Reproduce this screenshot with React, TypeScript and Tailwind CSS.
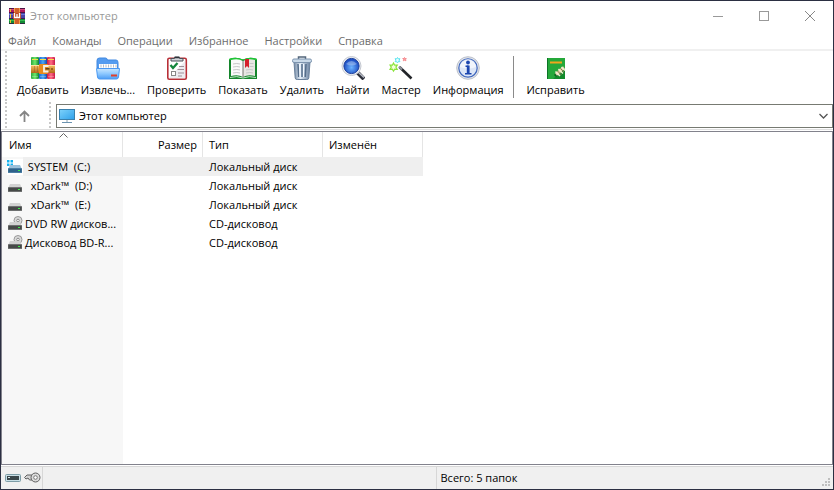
import { useState } from "react";
import type { ReactNode } from "react";

const menuItems = ["Файл", "Команды", "Операции", "Избранное", "Настройки", "Справка"];

const AppLogo = () => (
  <svg width="16" height="16" viewBox="0 0 16 16" aria-hidden="true">
    <rect width="16" height="5" fill="#b0185a" />
    <rect y="5" width="16" height="6" fill="#4a45a8" />
    <rect y="11" width="16" height="5" fill="#128a35" />
    <path d="M0 1.500h16" stroke="#d8487c" />
    <path d="M0 6.500h16" stroke="#6c78d8" />
    <path d="M0 12.500h16" stroke="#35b850" />
    <path d="M0 .500h16M0 4.500h16M0 10.500h16M0 15.500h16" stroke="#331340" strokeOpacity=".8" />
    <path d="M1.500 1v3M1.500 6v4M1.500 12v3" stroke="#f0c030" />
    <rect x="5" width="6" height="16" fill="#d0602a" />
    <path d="M5.500 0v4M10.500 0v4M5.500 12v4M10.500 12v4" stroke="#f0a048" />
    <rect x="4" y="5" width="8" height="6" fill="#b84420" />
    <path d="M5.500 5v4.500h5V5M8 6v3" fill="none" stroke="#fff" strokeWidth="1.300" />
  </svg>
);

const BooksIcon = () => (
  <svg width="24" height="24" viewBox="0 0 24 24" aria-hidden="true">
    <defs>
      <linearGradient id="bookGreen">
        <stop stopColor="#2aa83c" />
        <stop offset=".5" stopColor="#6fe86a" />
        <stop offset="1" stopColor="#0c8232" />
      </linearGradient>
      <linearGradient id="bookBlue">
        <stop stopColor="#1c5fd0" />
        <stop offset=".5" stopColor="#4aa8f4" />
        <stop offset="1" stopColor="#1a46a8" />
      </linearGradient>
      <linearGradient id="bookRed">
        <stop stopColor="#cc1a40" />
        <stop offset=".5" stopColor="#ff6c84" />
        <stop offset="1" stopColor="#c81848" />
      </linearGradient>
      <linearGradient id="belt" x2="0" y2="1">
        <stop stopColor="#f8c468" />
        <stop offset="1" stopColor="#b06818" />
      </linearGradient>
    </defs>
    <rect y="1" width="8" height="22" rx="1" fill="url(#bookGreen)" />
    <rect x="8" y="1" width="8" height="22" rx="1" fill="url(#bookBlue)" />
    <rect x="16" y="1" width="8" height="22" rx="1" fill="url(#bookRed)" />
    <path d="M1 3.500h6M9 3.500h6M17 3.500h6" stroke="#f5e14c" />
    <path d="M1 20.500h6M9 20.500h6M17 20.500h6" stroke="#fff" strokeOpacity=".25" />
    <rect y="9" width="24" height="8" fill="url(#belt)" />
    <path d="M0 9.500h24" stroke="#ffe0a0" />
    <path d="M3.500 10v6M6.500 10v6" stroke="#8a4a10" strokeOpacity=".35" />
    <rect x="8" y="8" width="9" height="10" rx="1" fill="#e88a1c" />
    <path d="M17.500 10h-4.500v5.500h4.500" fill="none" stroke="#f4f0e8" strokeWidth="1.800" />
    <path d="M14.500 12.800h4" stroke="#5a3a1a" strokeWidth="1.400" />
    <circle cx="21" cy="13" r="1" fill="#8a5010" />
  </svg>
);

const FolderIcon = () => (
  <svg width="24" height="24" viewBox="0 0 24 24" aria-hidden="true">
    <defs>
      <linearGradient id="folder" x2="0" y2="1">
        <stop stopColor="#c8e6ff" />
        <stop offset=".5" stopColor="#8cc8ff" />
        <stop offset="1" stopColor="#4c9cf4" />
      </linearGradient>
    </defs>
    <path d="M1 4.500Q1 2 3.500 2h6q1.500 0 2 2h8.500Q22 4 22 6.500V12H1z" fill="#559cf0" stroke="#4088e0" />
    <path d="M3 8h18v6H3z" fill="#fff" />
    <path d="M5 8.500v3M7.500 8.500v3M10 8.500v3M12.500 8.500v3M15 8.500v3M17.500 8.500v3M20 8.500v3" stroke="#b4bcc6" />
    <path d="M.500 12.500h23L22.500 21q-.2 2-2 2h-17q-1.800 0-2-2z" fill="url(#folder)" stroke="#4a98f2" />
    <path d="M15 19.500h6" stroke="#e0402c" strokeWidth="2" />
  </svg>
);

const ChecklistIcon = () => (
  <svg width="24" height="24" viewBox="0 0 24 24" aria-hidden="true">
    <rect x="2.800" y="2.200" width="18.500" height="21" rx="1.500" fill="#fff" stroke="#b83038" strokeWidth="1.600" />
    <path d="M4 22h16V5z" fill="#ececf0" />
    <path d="M6 5V2.500h3.500V1h5v1.500H18V5z" fill="#cfd3d8" stroke="#4b5058" />
    <path d="M10 1.500h4" stroke="#2d3138" strokeWidth="1.500" />
    <path d="M5.500 9l2.500 3L12.500 7" fill="none" stroke="#14863c" strokeWidth="2.300" />
    <path d="M14 10.500h5M12.500 13.500h6.500M13 17h6M13 20h4" stroke="#a08f98" />
    <rect x="6.500" y="15.500" width="4" height="4" fill="#fff" stroke="#888" />
  </svg>
);

const BookIcon = () => (
  <svg width="28" height="24" viewBox="0 0 28 24" aria-hidden="true">
    <path d="M0 3Q7 .500 14 3.500 21 .500 28 3v20H0z" fill="#14852b" />
    <path d="M0 3Q7 .500 14 3.500 21 .500 28 3v1H0z" fill="#1fc636" />
    <path d="M2 4q7-2 12 1v16q-5-3-12-1z" fill="#fafafa" />
    <path d="M26 4q-7-2-12 1v16q5-3 12-1z" fill="#e7e6e2" />
    <path d="M14 5v16" stroke="#77756f" />
    <path d="M4 8q4-1 7 0M4 11q4-1 7 0M4 14q4-1 7 0M4 17q4-1 7 0M20.500 7.500h4M20.500 10.500h4M17 14q4-1 7 0M17 17q4-1 7 0" fill="none" stroke="#c6c6c8" />
    <path d="M16 3h4v9l-2-2-2 2z" fill="#d51f2b" />
    <path d="M1 21.500q7-2 13 .5 6-2.500 13-.5" fill="none" stroke="#bfe6c4" />
  </svg>
);

const TrashIcon = () => (
  <svg width="24" height="24" viewBox="0 0 24 24" aria-hidden="true">
    <defs>
      <linearGradient id="bin">
        <stop stopColor="#7389a4" />
        <stop offset=".4" stopColor="#e4eef8" />
        <stop offset="1" stopColor="#6a82a0" />
      </linearGradient>
    </defs>
    <path d="M8.500 3.500V1h7v2.500" fill="none" stroke="#53657a" strokeWidth="1.500" />
    <path d="M4 6h16l-1.200 16q-.1 1.500-2 1.500H7.200q-1.900 0-2-1.500z" fill="url(#bin)" stroke="#6a819c" />
    <path d="M8 8l.7 13M12 8v13M16 8l-.7 13" stroke="#546d8a" strokeWidth="1.500" />
    <path d="M9.500 8l.5 13M13.500 8v13" stroke="#f2f8ff" />
    <rect x="2.500" y="3" width="19" height="3.500" rx="1.500" fill="#c9d9e8" stroke="#7d94ae" />
  </svg>
);

const SearchIcon = () => (
  <svg width="24" height="24" viewBox="0 0 24 24" aria-hidden="true">
    <defs>
      <radialGradient id="lens" cy=".6">
        <stop stopColor="#6db4ff" />
        <stop offset="1" stopColor="#1e50c4" />
      </radialGradient>
    </defs>
    <path d="M16 16l7 7" stroke="#2c2f3a" strokeWidth="4" />
    <path d="M16.500 15.500l6.500 6" stroke="#b9bdc8" strokeWidth="1.500" />
    <circle cx="10.500" cy="10" r="9.500" fill="#eceef2" stroke="#c4c8d0" />
    <circle cx="10.500" cy="10" r="7.600" fill="url(#lens)" stroke="#1b3f9c" />
    <path d="M5 8q5.500-6 11 0-5.500 3-11 0z" fill="#fff" fillOpacity=".3" />
  </svg>
);

const WandIcon = () => (
  <svg width="24" height="24" viewBox="0 0 24 24" aria-hidden="true">
    <path d="M10.500 11l12 11.500" stroke="#222429" strokeWidth="2.600" />
    <path d="M10 10.500l3 3" stroke="#8c9098" strokeWidth="2.400" />
    <path d="M4.500 7l1.200 2.200 2.500-.1-1.300 2 1.300 2.200-2.500-.1-1.200 2-1.200-2-2.300.2 1.300-2.300-1.200-2 2.300.1z" fill="#f2ffdc" stroke="#8ae43c" strokeWidth="1.200" />
    <path d="M8.500 1.500l.7 1.300 1.700-.1-.8 1.500.8 1.500-1.700-.1-.7 1.400-.8-1.400-1.600.1.800-1.500-.8-1.500 1.600.1z" fill="#e4ffff" stroke="#5ce4f0" />
    <path d="M15.500 1.500l.6 1 1.200.1-.7 1 .3 1.200-1.400-.6-1.200.6.300-1.200-.9-1 1.300-.1z" fill="#ffa4a4" stroke="#f58a90" />
  </svg>
);

const InfoIcon = () => (
  <svg width="24" height="24" viewBox="0 0 24 24" aria-hidden="true">
    <circle cx="12" cy="12" r="11.300" fill="#e2e5eb" stroke="#bcc1cb" />
    <circle cx="12" cy="12" r="9.200" fill="#dce6f7" stroke="#3f66bc" strokeWidth="1.200" />
    <path d="M4 11a8 8 0 0 1 16 0q-8 3-16 0z" fill="#fff" fillOpacity=".6" />
    <circle cx="12" cy="6.500" r="1.900" fill="#1c46b0" />
    <path d="M9.500 10.200h3M9 17.800h6.500" fill="none" stroke="#1c46b0" strokeWidth="1.600" />
    <path d="M12.200 9.500v8" stroke="#1c46b0" strokeWidth="2.800" />
  </svg>
);

const RepairIcon = () => (
  <svg width="24" height="24" viewBox="0 0 24 24" aria-hidden="true">
    <rect x="3" y="2" width="18" height="21" fill="#25a83a" />
    <path d="M3.500 2v21" stroke="#0b7426" />
    <path d="M21 12v11H9z" fill="#128a2b" />
    <path d="M6 6.500h12" stroke="#f2a51c" strokeWidth="2" />
    <path d="M11 20l3-3" stroke="#0b641f" strokeWidth="3" />
    <path d="M12 18.500l8-7" stroke="#d8cfa0" strokeWidth="3" />
    <path d="M11.500 15.500l4.500 4.500M14.500 13l4.500 4.500M17.500 11l3.500 3.500" stroke="#f3edd0" strokeWidth="1.500" />
    <path d="M13.500 15l4 4M16.500 12.500l3.500 3.500" stroke="#8c7c4e" />
  </svg>
);

const MonitorIcon = () => (
  <svg width="16" height="16" viewBox="0 0 16 16" aria-hidden="true">
    <defs>
      <linearGradient id="screen" x2="1" y2="1">
        <stop stopColor="#7ed2fb" />
        <stop offset="1" stopColor="#2ea0ea" />
      </linearGradient>
    </defs>
    <rect x=".5" y="1.500" width="15" height="10" fill="url(#screen)" stroke="#3a80ac" />
    <path d="M8 12v2" stroke="#c4d0d8" strokeWidth="2" />
    <path d="M3 14.500h10" stroke="#6b93b0" />
  </svg>
);

type DriveKind = "system" | "disk" | "optical";

const DriveIcon = ({ kind }: { kind: DriveKind }) => (
  <svg width="16" height="16" viewBox="0 0 16 16" className="shrink-0" aria-hidden="true">
    {kind === "system" && (
      <>
        <rect width="16" height="16" fill="#fff" />
        <path d="M0 1h2.500v2.500H0zM3.500 1H6v2.500H3.500zM0 4.500h2.500V7H0zM3.500 4.500H6V7H3.500z" fill="#12b0ee" />
      </>
    )}
    {kind === "optical" && (
      <>
        <circle cx="11" cy="4.500" r="4" fill="#dadada" stroke="#989898" />
        <circle cx="11" cy="4.500" r="1.300" fill="#fff" stroke="#8a8a8a" />
      </>
    )}
    <path d="M3 6h10l1.500 3.500h-13z" fill={kind === "system" ? "#9cc0da" : "#d2d2d2"} />
    <rect x="1" y="9" width="14" height="5" rx=".5" fill={kind === "system" ? "#4b7ea4" : "#6e7070"} />
    <rect x="1.500" y="10" width="13" height="3" fill={kind === "system" ? "#2f628a" : "#464948"} />
    <rect x="11" y="11" width="2" height="1" fill="#3df04a" />
  </svg>
);

const DriveStatusIcon = () => (
  <svg width="16" height="10" viewBox="0 0 16 10" aria-hidden="true">
    <rect x=".5" y="1.500" width="15" height="7" rx="1" fill="#c9dfe6" stroke="#7d9ca6" />
    <rect x="2" y="3" width="12" height="4" fill="#3a464a" />
    <path d="M3 4.500h2" stroke="#d5e4e8" />
  </svg>
);

const KeyIcon = () => (
  <svg width="17" height="12" viewBox="0 0 17 12" aria-hidden="true">
    <path d="M9 3H3L.500 5.500 2 7l2-1 1.500 2H9" fill="#d4d4d4" stroke="#606060" />
    <circle cx="11.500" cy="5.500" r="4.500" fill="#dadada" stroke="#606060" />
    <circle cx="11.500" cy="5.500" r="1.800" fill="#fff" stroke="#777" />
  </svg>
);

const Grip = () => (
  <div className="w-0.5 self-stretch bg-[repeating-linear-gradient(#c8c8c8_0_2px,#fff_2px_4px)]" />
);

const ToolButton = ({ label, icon }: { label: string; icon: ReactNode }) => (
  <button type="button" className="flex flex-col items-center gap-0.5">
    {icon}
    <span className="whitespace-nowrap leading-4">{label}</span>
  </button>
);

const tools = [
  { label: "Добавить", icon: <BooksIcon /> },
  { label: "Извлечь...", icon: <FolderIcon /> },
  { label: "Проверить", icon: <ChecklistIcon /> },
  { label: "Показать", icon: <BookIcon /> },
  { label: "Удалить", icon: <TrashIcon /> },
  { label: "Найти", icon: <SearchIcon /> },
  { label: "Мастер", icon: <WandIcon /> },
  { label: "Информация", icon: <InfoIcon /> },
];

const drives: { name: string; type: string; kind: DriveKind }[] = [
  { name: " SYSTEM  (C:)", type: "Локальный диск", kind: "system" },
  { name: "  xDark™  (D:)", type: "Локальный диск", kind: "disk" },
  { name: "  xDark™  (E:)", type: "Локальный диск", kind: "disk" },
  { name: "DVD RW дисков...", type: "CD-дисковод", kind: "optical" },
  { name: "Дисковод BD-R...", type: "CD-дисковод", kind: "optical" },
];

const FileList = () => {
  const [selected, setSelected] = useState(0);

  return (
    <table className="w-[421px] table-fixed border-separate border-spacing-0 text-left">
      <colgroup>
        <col className="w-[121px]" />
        <col className="w-20" />
        <col className="w-[120px]" />
        <col className="w-[100px]" />
      </colgroup>
      <thead>
        <tr className="h-[25px] bg-white">
          <th className="relative border-r border-[#e5e5e5] p-0 pl-[7px] font-normal">
            Имя
            <svg width="9" height="5" viewBox="0 0 9 5" className="absolute top-px left-[57px]" aria-hidden="true">
              <path d="M.500 4.500l4-4 4 4" fill="none" stroke="#666" />
            </svg>
          </th>
          <th className="border-r border-[#e5e5e5] p-0 pr-[5px] text-right font-normal">Размер</th>
          <th className="border-r border-[#e5e5e5] p-0 pl-1.5 font-normal">Тип</th>
          <th className="border-r border-[#e5e5e5] p-0 pl-1.5 font-normal">Изменён</th>
        </tr>
      </thead>
      <tbody>
        {drives.map((drive, i) => (
          <tr key={drive.name} onClick={() => setSelected(i)} className={`h-[19px] ${i === selected ? "bg-[#efefef]" : ""}`}>
            <td className="p-0">
              <div className="flex h-[19px] items-center">
                <span className="flex h-full items-center bg-[#f7f7f7] pl-[5px]">
                  <DriveIcon kind={drive.kind} />
                </span>
                <span className="pl-0.5 whitespace-pre">{drive.name}</span>
              </div>
            </td>
            <td className="p-0" />
            <td className="p-0 pl-1.5 whitespace-nowrap">{drive.type}</td>
            <td className="p-0" />
          </tr>
        ))}
      </tbody>
    </table>
  );
};

export default function App() {
  return (
    <div className="flex min-h-screen flex-col border border-[#2b2f42] bg-white font-['Open_Sans','Noto_Sans',sans-serif] text-[11px] leading-4 text-black">
      {/* Title bar */}
      <header className="flex h-[30px] items-center justify-between pl-2 text-[#999]">
        <div className="flex items-center gap-[5px]">
          <AppLogo />
          <h1>Этот компьютер</h1>
        </div>
        <div className="flex h-full">
          <button type="button" aria-label="Свернуть" className="flex w-[46px] items-center justify-center">
            <svg width="10" height="10" viewBox="0 0 10 10">
              <path d="M0 5.500h10" stroke="#999" />
            </svg>
          </button>
          <button type="button" aria-label="Развернуть" className="flex w-[46px] items-center justify-center">
            <svg width="10" height="10" viewBox="0 0 10 10">
              <rect x=".5" y=".5" width="9" height="9" fill="none" stroke="#999" />
            </svg>
          </button>
          <button type="button" aria-label="Закрыть" className="flex w-[46px] items-center justify-center">
            <svg width="10" height="10" viewBox="0 0 10 10">
              <path d="M0 0l10 10M10 0L0 10" stroke="#888" />
            </svg>
          </button>
        </div>
      </header>

      {/* Menu */}
      <nav className="flex h-5 items-end gap-4 border-b-2 border-[#f0f0f0] pl-[7px] text-[#6d6d6d]">
        {menuItems.map((item) => (
          <button key={item} type="button">
            {item}
          </button>
        ))}
      </nav>

      {/* Toolbar */}
      <div className="flex h-[51px] items-center pl-1">
        <Grip />
        <div className="flex items-center gap-3 pl-2.5">
          {tools.map((tool) => (
            <ToolButton key={tool.label} {...tool} />
          ))}
        </div>
        <div className="ml-2.5 h-[42px] w-px bg-[#8a8a8a]" />
        <div className="pl-3">
          <ToolButton label="Исправить" icon={<RepairIcon />} />
        </div>
      </div>

      {/* Address bar */}
      <div className="flex h-[28px] items-center border-b border-[#e0e0e0] pl-1">
        <Grip />
        <button type="button" aria-label="Вверх" className="flex flex-1 max-w-[42px] items-center justify-center pr-2">
          <svg width="11" height="12" viewBox="0 0 11 12">
            <path d="M5.500 12V1.500M1 6l4.500-4.500L10 6" fill="none" stroke="#858585" strokeWidth="1.800" />
          </svg>
        </button>
        <Grip />
        <label className="ml-[5px] flex h-6 flex-1 items-center gap-1 border border-[#777a72] pl-0.5">
          <MonitorIcon />
          <select aria-label="Адрес" className="h-full flex-1 appearance-none bg-transparent outline-none">
            <option>Этот компьютер</option>
          </select>
          <svg width="9" height="6" viewBox="0 0 9 6" className="mr-1">
            <path d="M.500 1l4 4 4-4" fill="none" stroke="#555" strokeWidth="1.300" />
          </svg>
        </label>
      </div>

      {/* File list */}
      <main className="mt-px flex-1 border border-[#82828c] bg-[linear-gradient(90deg,#f7f7f7_121px,#fff_121px)]">
        <div className="bg-[linear-gradient(#fff_25px,transparent_25px)]">
          <FileList />
        </div>
      </main>

      {/* Status bar */}
      <footer className="mt-px flex h-[23px] border-t border-[#d7d7d7] bg-[#f0f0f0]">
        <div className="flex w-[42px] items-center gap-[3px] border-r border-[#d7d7d7] pl-1">
          <DriveStatusIcon />
          <KeyIcon />
        </div>
        <div className="flex-1 border-r border-[#d7d7d7]" />
        <div className="flex flex-1 items-center justify-between pl-1">
          <span>Всего: 5 папок</span>
          <svg width="9" height="9" viewBox="0 0 9 9" className="mr-0.5 mb-0.5 self-end" aria-hidden="true">
            <path d="M6 0h2v2H6zM3 3h2v2H3zM6 3h2v2H6zM0 6h2v2H0zM3 6h2v2H3zM6 6h2v2H6z" fill="#bfbfbf" />
          </svg>
        </div>
      </footer>
    </div>
  );
}
